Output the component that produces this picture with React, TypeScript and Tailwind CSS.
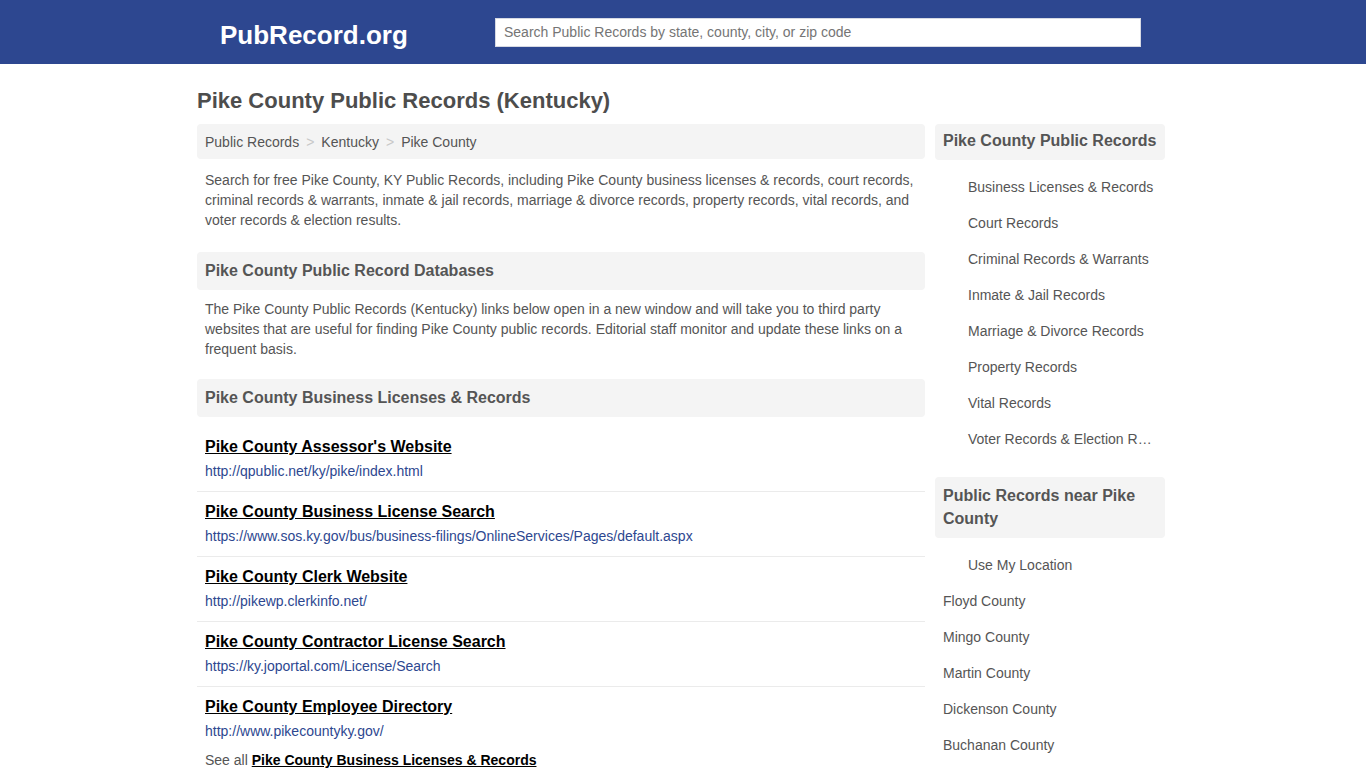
import React from "react";

const sideLinks = [
  "Business Licenses & Records",
  "Court Records",
  "Criminal Records & Warrants",
  "Inmate & Jail Records",
  "Marriage & Divorce Records",
  "Property Records",
  "Vital Records",
  "Voter Records & Election Results",
];

const nearby = [
  "Floyd County",
  "Mingo County",
  "Martin County",
  "Dickenson County",
  "Buchanan County",
];

const records = [
  { title: "Pike County Assessor's Website", url: "http://qpublic.net/ky/pike/index.html" },
  {
    title: "Pike County Business License Search",
    url: "https://www.sos.ky.gov/bus/business-filings/OnlineServices/Pages/default.aspx",
  },
  { title: "Pike County Clerk Website", url: "http://pikewp.clerkinfo.net/" },
  { title: "Pike County Contractor License Search", url: "https://ky.joportal.com/License/Search" },
  { title: "Pike County Employee Directory", url: "http://www.pikecountyky.gov/" },
];

const App: React.FC = () => {
  return (
    <div className="min-h-screen bg-white font-['Liberation_Sans',Arial,sans-serif] text-[#555]">
      <header className="h-16 bg-[#2d4790]">
        <div className="mx-auto flex h-full w-[968px] items-center -translate-x-[2px]">
          <div className="w-[298px] translate-y-[3px] pl-[23px] text-[26px] font-bold leading-none text-white">
            PubRecord.org
          </div>
          <input
            type="text"
            placeholder="Search Public Records by state, county, city, or zip code"
            className="h-[29px] w-[646px] border border-[#d6d9e3] bg-white px-2 text-[14px] text-[#333] outline-none placeholder:text-[#757575]"
          />
        </div>
      </header>

      <div className="mx-auto w-[968px] -translate-x-[2px] pt-[24px]">
        <h1 className="mb-[10px] text-[22px] font-bold leading-[26px] text-[#4d4d4d]">
          Pike County Public Records (Kentucky)
        </h1>

        <div className="flex gap-[10px]">
          {/* main column */}
          <main className="w-[728px]">
            <div className="flex h-[35px] items-center rounded bg-[#f4f4f4] px-2 pt-[1px] text-[14px]">
              <span>Public Records</span>
              <span className="mx-[7px] text-[#c8c8c8]">&gt;</span>
              <span>Kentucky</span>
              <span className="mx-[7px] text-[#c8c8c8]">&gt;</span>
              <span>Pike County</span>
            </div>

            <p className="mt-[11px] px-2 text-[14px] leading-[20px]">
              Search for free Pike County, KY Public Records, including Pike County business licenses &amp;
              records, court records, criminal records &amp; warrants, inmate &amp; jail records, marriage &amp;
              divorce records, property records, vital records, and voter records &amp; election results.
            </p>

            <h2 className="mt-[22px] flex h-[38px] items-center rounded bg-[#f4f4f4] px-2 text-[16px] font-bold">
              Pike County Public Record Databases
            </h2>

            <p className="mt-[9px] px-2 text-[14px] leading-[20px]">
              The Pike County Public Records (Kentucky) links below open in a new window and will take you to
              third party websites that are useful for finding Pike County public records. Editorial staff
              monitor and update these links on a frequent basis.
            </p>

            <h2 className="mt-[20px] flex h-[38px] items-center rounded bg-[#f4f4f4] px-2 text-[16px] font-bold">
              Pike County Business Licenses &amp; Records
            </h2>

            <ul className="mt-[10px]">
              {records.map((r, i) => (
                <li
                  key={r.title}
                  className={`px-2 pt-[10px] pb-[10px] ${i < records.length - 1 ? "border-b border-[#ebebeb]" : ""}`}
                >
                  <a href="#" className="block text-[16px] font-bold leading-[20px] text-black underline">
                    {r.title}
                  </a>
                  <div className="mt-[4px] text-[14px] leading-[20px] text-[#2d4790]">{r.url}</div>
                </li>
              ))}
            </ul>

            <div className="-mt-[1px] px-2 text-[14px] leading-[20px]">
              See all{" "}
              <a href="#" className="font-bold text-black underline">
                Pike County Business Licenses &amp; Records
              </a>
            </div>
          </main>

          {/* sidebar */}
          <aside className="w-[230px]">
            <h3 className="rounded bg-[#f4f4f4] px-2 pt-[5px] pb-[8px] text-[16px] font-bold leading-[23px]">
              Pike County Public Records
            </h3>
            <ul className="mt-[9px]">
              {sideLinks.map((s) => (
                <li key={s} className="truncate py-2 pl-[33px] pr-[9px] text-[14px] leading-[20px]">
                  {s}
                </li>
              ))}
            </ul>

            <h3 className="mt-[20px] rounded bg-[#f4f4f4] px-2 pt-[7px] pb-[8px] text-[16px] font-bold leading-[23px]">
              Public Records near Pike County
            </h3>
            <ul className="mt-[9px]">
              <li className="py-2 pl-[33px] text-[14px] leading-[20px]">Use My Location</li>
              {nearby.map((n) => (
                <li key={n} className="py-2 pl-2 text-[14px] leading-[20px]">
                  {n}
                </li>
              ))}
            </ul>
          </aside>
        </div>
      </div>
    </div>
  );
};

export default App;
